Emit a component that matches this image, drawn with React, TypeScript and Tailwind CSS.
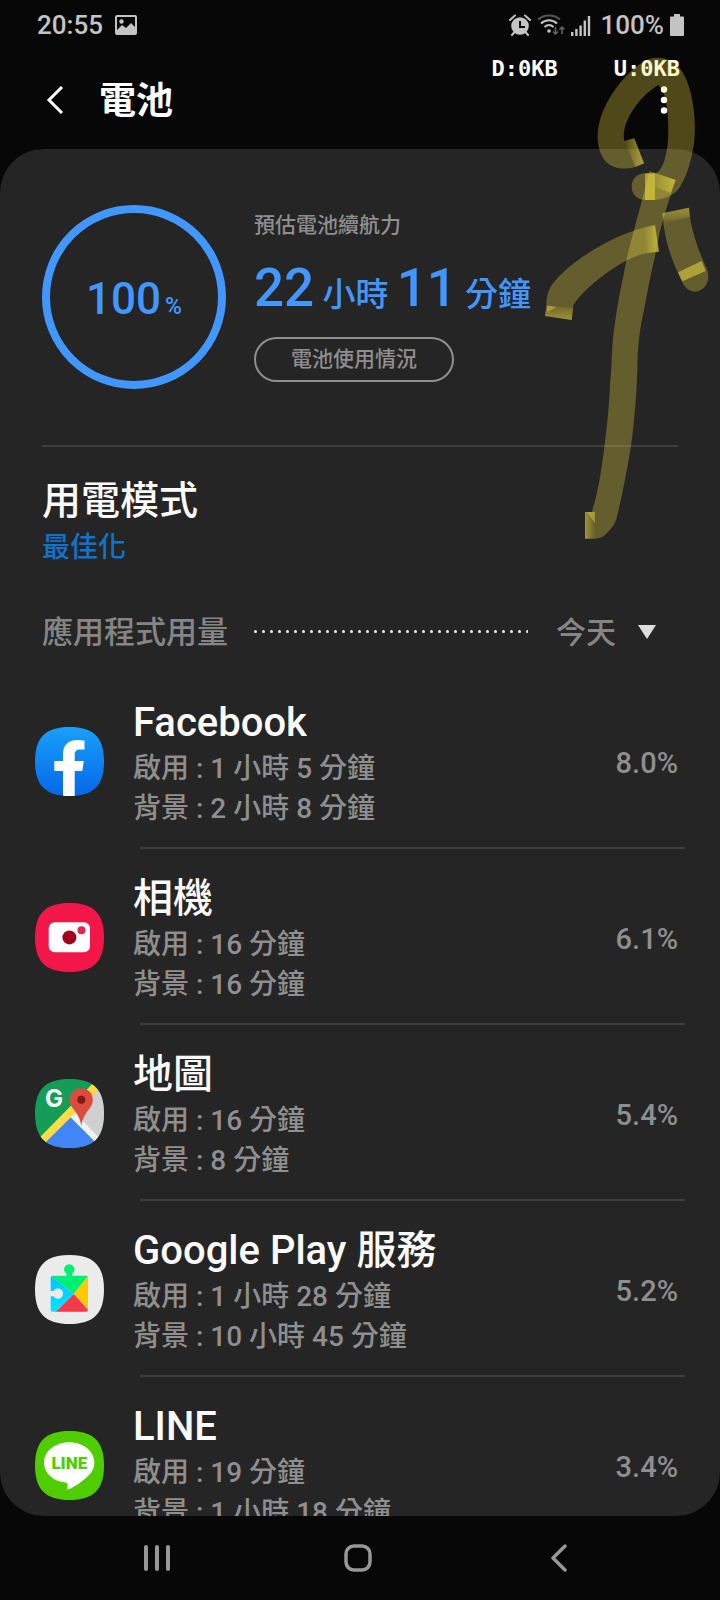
import { useId, useState } from "react";
import type { ReactNode } from "react";

interface AppUsage {
  name: string;
  active: string;
  background: string;
  percent: string;
  icon: ReactNode;
}

const SQUIRCLE =
  "M34.5 0C58.5 0 69 10.5 69 34.5S58.5 69 34.5 69 0 58.5 0 34.5 10.5 0 34.5 0Z";

function AppIcon({ children }: { children: ReactNode }) {
  const id = useId();
  return (
    <svg viewBox="0 0 69 69" className="size-[69px] shrink-0" aria-hidden="true">
      <clipPath id={id}>
        <path d={SQUIRCLE} />
      </clipPath>
      <g clipPath={`url(#${id})`}>{children}</g>
    </svg>
  );
}

function FacebookIcon() {
  return (
    <AppIcon>
      <linearGradient id="fb" x1="0" y1="0" x2="0" y2="1">
        <stop offset="0" stopColor="#18a0fb" />
        <stop offset="1" stopColor="#0668e8" />
      </linearGradient>
      <rect width="69" height="69" fill="url(#fb)" />
      <path
        d="M28 69V44H19.3V34H28V27C28 18 33.5 13 42 13q4 0 7.5.6v8.9H45c-4 0-5.3 2-5.3 5.3V34h9.1l-1.5 10h-7.6v25Z"
        fill="#fff"
      />
    </AppIcon>
  );
}

function CameraIcon() {
  return (
    <AppIcon>
      <rect width="69" height="69" fill="#f31648" />
      <rect x="13.7" y="19.3" width="41.3" height="30" rx="6" fill="#fff" />
      <circle cx="34.4" cy="34.4" r="7" fill="#a3001f" />
      <circle cx="46.5" cy="27.3" r="4" fill="#e32450" />
    </AppIcon>
  );
}

function MapsIcon() {
  return (
    <AppIcon>
      <rect width="69" height="69" fill="#159d58" />
      <path d="M69 5.6 34.7 37.7 69 72Z" fill="#d0d0d0" />
      <path d="M34.7 37.7 39.5 33 69 64v8Z" fill="#f1f1f1" />
      <path d="M34.7 37.5 69 72H0Z" fill="#4285f4" />
      <path d="M62.3-.1 69 5.6 4.4 69.5-1.6 64.8Z" fill="#fbdc45" />
      <path
        d="M46.3 47C45.3 40 43.2 36.6 39.6 31.6 36.8 27.8 34.8 25 34.8 20.7a11.5 11.5 0 0 1 23 0c0 4.3-2 7.1-4.8 10.9C49.4 36.6 47.3 40 46.3 47Z"
        fill="#dd4b3e"
      />
      <circle cx="46.3" cy="20.7" r="4" fill="#7d1c16" />
      <text x="10" y="28" fill="#fff" className="font-[Inter] text-[24px] font-bold">
        G
      </text>
    </AppIcon>
  );
}

function PlayServicesIcon() {
  return (
    <AppIcon>
      <linearGradient id="play-left" x1="0" y1="0" x2="0" y2="1">
        <stop offset="0" stopColor="#00c3ff" />
        <stop offset="1" stopColor="#00e5ff" />
      </linearGradient>
      <clipPath id="piece">
        <rect x="15.7" y="20.7" width="37.3" height="36" rx="2" />
      </clipPath>
      <rect width="69" height="69" fill="#ebebeb" />
      <path d="M31.5 21v-2.2a5.2 5.2 0 1 1 5.6 0V21Z" fill="#00f076" />
      <g clipPath="url(#piece)">
        <path d="M15 20 38.7 39 54 20Z" fill="#00f076" />
        <path d="M54 20 38.7 39 54 55Z" fill="#ffc900" />
        <path d="M38.7 39 19.8 57.5H55.5Z" fill="#f23a4b" />
        <path d="M15 20 38.7 39 19.8 57.5H15Z" fill="url(#play-left)" />
      </g>
      <path d="M15 36h3.6a5.1 5.1 0 1 1 0 5.2H15Z" fill="#ebebeb" />
    </AppIcon>
  );
}

function LineIcon() {
  return (
    <AppIcon>
      <rect width="69" height="69" fill="#4ecd00" />
      <path
        d="M34.2 11.2c14 0 25.2 9 25.2 20.2 0 4.6-1.8 8.7-5.4 12.6-5.2 6-16.8 13-19.5 14.1s-2.3-.7-2.1-1.9c.5-3 .2-4.4-2-4.6C18 50.2 9 42 9 31.4c0-11.2 11.3-20.2 25.2-20.2Z"
        fill="#fff"
      />
      <text
        x="34.3"
        y="38"
        textAnchor="middle"
        fill="#4ecd00"
        className="font-[Roboto] text-[17px] font-black"
      >
        LINE
      </text>
    </AppIcon>
  );
}

const apps: AppUsage[] = [
  { name: "Facebook", active: "1 小時 5 分鐘", background: "2 小時 8 分鐘", percent: "8.0%", icon: <FacebookIcon /> },
  { name: "相機", active: "16 分鐘", background: "16 分鐘", percent: "6.1%", icon: <CameraIcon /> },
  { name: "地圖", active: "16 分鐘", background: "8 分鐘", percent: "5.4%", icon: <MapsIcon /> },
  { name: "Google Play 服務", active: "1 小時 28 分鐘", background: "10 小時 45 分鐘", percent: "5.2%", icon: <PlayServicesIcon /> },
  { name: "LINE", active: "19 分鐘", background: "1 小時 18 分鐘", percent: "3.4%", icon: <LineIcon /> },
];

function StatusBar() {
  return (
    <div className="flex h-[50px] shrink-0 items-center justify-between pr-9 pl-[37px] text-[26px] leading-none font-medium text-[#c4c4c4]">
      <div className="flex items-center gap-3">
        <span>20:55</span>
        <svg viewBox="0 0 22 20" className="h-5 w-[22px]" fill="currentColor" aria-hidden="true">
          <path
            fillRule="evenodd"
            d="M2 0h18a2 2 0 0 1 2 2v16a2 2 0 0 1-2 2H2a2 2 0 0 1-2-2V2a2 2 0 0 1 2-2Zm0 2v13l5-5 4 3 5-5 4 4V2Z"
          />
          <circle cx="6.5" cy="6.5" r="2.2" />
        </svg>
      </div>
      <div className="flex items-center gap-[6px]">
        {/* Alarm */}
        <svg viewBox="0 0 22 22" className="size-[22px]" fill="none" stroke="currentColor" strokeWidth="2" aria-hidden="true">
          <circle cx="11" cy="12" r="8.8" fill="currentColor" stroke="none" />
          <path d="M1 6 6 1.5M21 6l-5-4.5M5.5 18 3 21M16.5 18l2.5 3" strokeLinecap="round" />
          <path d="M11 7v6h5" stroke="#070707" />
        </svg>
        {/* Wi-Fi */}
        <svg viewBox="0 0 28 22" className="h-[22px] w-7" fill="none" stroke="currentColor" strokeWidth="2" aria-hidden="true">
          <path d="M1 5.5C7 0 17 0 23 5.5" stroke="#555" />
          <path d="M4 9.5c4.5-4.5 11.5-4.5 16 0M7.5 13c3-2.7 6-2.7 9 0" />
          <circle cx="12" cy="17" r="1.8" fill="currentColor" stroke="none" />
          <path d="M18.5 13v7M16 17.5l2.5 2.5 2.5-2.5M25 20v-7M22.5 15.5 25 13l2.5 2.5" stroke="#666" strokeWidth="1.5" />
        </svg>
        {/* Signal */}
        <svg viewBox="0 0 20 21" className="h-[21px] w-5" fill="currentColor" aria-hidden="true">
          <path d="M0 17h2.4v4H0zM4.2 14h2.4v7H4.2zM8.4 10.5h2.4V21H8.4zM12.6 5.5H15V21h-2.4zM16.8 1h2.4v20h-2.4z" />
        </svg>
        <span className="pl-1">100%</span>
        {/* Battery */}
        <svg viewBox="0 0 14 22" className="h-[22px] w-[14px]" fill="currentColor" aria-hidden="true">
          <path d="M4 0h6v2.5h3a1 1 0 0 1 1 1V21a1 1 0 0 1-1 1H1a1 1 0 0 1-1-1V3.5a1 1 0 0 1 1-1h3Z" />
        </svg>
      </div>
    </div>
  );
}

function Header() {
  return (
    <header className="relative flex h-[99px] shrink-0 items-center justify-between pr-12 pl-[46px] text-white">
      <div className="flex items-center gap-[35px]">
        <button aria-label="返回">
          <svg viewBox="0 0 18 28" className="h-7 w-[18px]" fill="none" stroke="currentColor" strokeWidth="3" aria-hidden="true">
            <path d="M16 1 3 14l13 13" />
          </svg>
        </button>
        <h1 className="pt-1 text-[37px] leading-none font-bold">電池</h1>
      </div>
      <button aria-label="更多選項">
        <svg viewBox="0 0 16 28" className="h-7 w-4" fill="currentColor" aria-hidden="true">
          <circle cx="8" cy="3.5" r="3.2" />
          <circle cx="8" cy="14" r="3.2" />
          <circle cx="8" cy="24.5" r="3.2" />
        </svg>
      </button>
      {/* Network speed overlay */}
      <div className="absolute top-[7px] right-10 flex gap-14 font-['DejaVu_Sans_Mono',monospace] text-[22px] leading-6 font-bold">
        <span>D:0KB</span>
        <span>U:0KB</span>
      </div>
    </header>
  );
}

function Summary() {
  return (
    <section className="mx-[42px] flex gap-7 border-b-2 border-[#3d3d3d] pt-14 pb-14">
      <div className="flex size-[184px] shrink-0 items-center justify-center rounded-full border-8 border-[#4297ff] text-[#4297ff]">
        <p className="flex items-baseline gap-1 pt-1 text-[44px] leading-none font-medium">
          100<span className="text-[23px]">%</span>
        </p>
      </div>
      <div className="flex flex-col items-start pt-2 font-medium">
        <p className="text-[21px] leading-6 text-[#8f8f8f]">預估電池續航力</p>
        <p className="mt-[21px] text-[33px] leading-[60px] whitespace-nowrap text-[#4297ff]">
          <span className="text-[53px]">22</span> 小時 <span className="text-[53px]">11</span> 分鐘
        </p>
        <button className="mt-3 h-[45px] rounded-full border-2 border-[#8f8f8f] px-[35px] text-[21px] leading-none text-[#8f8f8f]">
          電池使用情況
        </button>
      </div>
    </section>
  );
}

function PeriodRow() {
  const [period, setPeriod] = useState("today");
  return (
    <div className="mt-[44px] flex items-center px-[42px] text-[30px] leading-10 font-medium text-[#858585]">
      <label htmlFor="period" className="text-[31px]">應用程式用量</label>
      <svg className="mb-1 ml-[26px] h-[3px] min-w-0 flex-1" aria-hidden="true">
        <pattern id="dots" width="8" height="3" patternUnits="userSpaceOnUse">
          <circle cx="1.5" cy="1.5" r="1.5" fill="#ececec" />
        </pattern>
        <rect width="100%" height="3" fill="url(#dots)" />
      </svg>
      <div className="relative ml-7">
        <select
          id="period"
          value={period}
          onChange={(e) => setPeriod(e.target.value)}
          className="w-[122px] appearance-none bg-transparent outline-none"
        >
          <option value="today">今天</option>
        </select>
        <svg viewBox="0 0 18 14" className="pointer-events-none absolute top-3 right-[22px] h-[14px] w-[18px]" fill="#dedede" aria-hidden="true">
          <path d="M0 0h18L9 14Z" />
        </svg>
      </div>
    </div>
  );
}

function AppRow({ app, last }: { app: AppUsage; last: boolean }) {
  return (
    <li className="flex h-[176px] items-center pl-[35px]">
      {app.icon}
      <div className="relative ml-[29px] flex h-full flex-1 items-center justify-between pr-[42px]">
        <div className="pt-1 font-medium">
          <h3 className="text-[40px] leading-[52px] text-[#fafafa]">{app.name}</h3>
          <p className="text-[28px] leading-10 text-[#8f8f8f]">啟用 : {app.active}</p>
          <p className="text-[28px] leading-10 text-[#8f8f8f]">背景 : {app.background}</p>
        </div>
        <span className="pt-1 text-[29px] leading-none font-medium text-[#8f8f8f]">{app.percent}</span>
        {!last && <div className="absolute right-[35px] bottom-0 left-[7px] h-[2px] bg-[#3d3d3d]" />}
      </div>
    </li>
  );
}

// Highlighter strokes over the top right corner
function Marker() {
  return (
    <svg
      viewBox="0 0 600 1680"
      className="pointer-events-none absolute top-0 right-0 h-[560px] w-[200px]"
      aria-hidden="true"
    >
      <defs>
        <linearGradient id="tip-r">
          <stop offset="0" stopColor="#f6e440" stopOpacity="0" />
          <stop offset="1" stopColor="#f6e440" stopOpacity="0.5" />
        </linearGradient>
        <linearGradient id="tip-l">
          <stop offset="0" stopColor="#f6e440" stopOpacity="0.4" />
          <stop offset="1" stopColor="#f6e440" stopOpacity="0" />
        </linearGradient>
        <linearGradient id="tip-t" x1="0" y1="0" x2="0" y2="1">
          <stop offset="0" stopColor="#f6e440" stopOpacity="0.4" />
          <stop offset="1" stopColor="#f6e440" stopOpacity="0.05" />
        </linearGradient>
        <linearGradient id="tip-b" x1="0" y1="0" x2="0" y2="1">
          <stop offset="0" stopColor="#f6e440" stopOpacity="0.05" />
          <stop offset="1" stopColor="#f6e440" stopOpacity="0.4" />
        </linearGradient>
      </defs>
      <g transform="translate(0 120)">
        <g fill="#f9e646" fillOpacity="0.3">
          <path d="M372 370C340 388 300 392 270 375 233 350 225 290 240 240 260 170 325 85 385 58 430 45 470 60 495 110 520 160 530 250 522 310 515 355 503 405 480 440 465 465 430 480 395 480H375C322 480 322 400 375 400H405C430 395 441 340 444 300 448 240 440 180 428 150L415 135C370 160 300 240 313 303L343 295Z" />
          <path d="M388 393C370 475 340 570 318 665 305 740 297 760 285 850 273 920 277 980 270 1030 268 1090 263 1140 258 1180 248 1270 235 1360 215 1416H195V1496H225C235 1494 245 1494 255 1484 270 1470 285 1456 291 1430 310 1350 328 1260 338 1180 346 1110 350 1050 352 990 352 920 360 860 372 810 385 740 395 690 407 640 420 560 440 500 467 420Z" />
          <path d="M405 556C310 570 160 650 95 735 80 760 78 785 80 797L75 828 155 840 160 795C200 735 300 665 355 646 380 638 400 636 417 635Z" />
          <path d="M427 520 507 503C512 570 535 630 560 686 576 725 550 755 525 755 500 755 488 735 475 700 450 650 432 590 427 520Z" />
        </g>
        <path d="M313 303 343 295 372 370 346 381Z" fill="url(#tip-r)" />
        <path d="M375 400H405V480H375Z" fill="#f6e440" fillOpacity="0.5" />
        <path d="M388 393 467 420 452 458 405 442V400Z" fill="url(#tip-r)" />
        <path d="M427 520 507 503 510 530 434 549Z" fill="url(#tip-t)" />
        <path d="M474 697 545 663 557 693 487 724Z" fill="#f6e440" fillOpacity="0.5" />
        <path d="M372 563 405 556 417 635 382 639Z" fill="url(#tip-r)" />
        <path d="M78 795 160 805 155 840 75 828Z" fill="url(#tip-b)" />
        <path d="M80 796 109 802 82 816Z" fill="#f6e440" fillOpacity="0.4" />
        <path d="M195 1416H225V1496H195Z" fill="url(#tip-l)" />
        <path d="M201 1416H225V1450Z" fill="#f6e440" fillOpacity="0.4" />
      </g>
    </svg>
  );
}

function NavBar() {
  return (
    <nav className="flex h-[84px] shrink-0 items-center justify-center gap-[173px] pr-1 text-[#979797]">
      <button aria-label="最近使用">
        <svg viewBox="0 0 28 28" className="size-7" stroke="currentColor" strokeWidth="4" strokeLinecap="round" aria-hidden="true">
          <path d="M3 3v22M14 3v22M25 3v22" />
        </svg>
      </button>
      <button aria-label="首頁">
        <svg viewBox="0 0 28 28" className="size-7" fill="none" stroke="currentColor" strokeWidth="3.5" aria-hidden="true">
          <rect x="2" y="2" width="24" height="24" rx="8" />
        </svg>
      </button>
      <button aria-label="返回">
        <svg viewBox="0 0 28 28" className="size-7" fill="none" stroke="currentColor" strokeWidth="3.5" strokeLinecap="round" strokeLinejoin="round" aria-hidden="true">
          <path d="M20 2 8 14l12 12" />
        </svg>
      </button>
    </nav>
  );
}

export default function App() {
  return (
    <div
      lang="zh-Hant"
      className="relative flex h-screen flex-col overflow-hidden bg-[#070707] font-[Roboto,'Noto_Sans_CJK_TC',sans-serif]"
    >
      <StatusBar />
      <Header />
      <main className="min-h-0 flex-1 overflow-hidden rounded-[44px] bg-[#252525]">
        <Summary />
        <section className="px-[42px] pt-7 font-medium">
          <h2 className="text-[39px] leading-[52px] text-[#fafafa]">用電模式</h2>
          <p className="text-[28px] leading-[42px] text-[#0f74cd]">最佳化</p>
        </section>
        <PeriodRow />
        <ul className="mt-5">
          {apps.map((app, i) => (
            <AppRow key={app.name} app={app} last={i === apps.length - 1} />
          ))}
        </ul>
      </main>
      <NavBar />
      <Marker />
    </div>
  );
}
